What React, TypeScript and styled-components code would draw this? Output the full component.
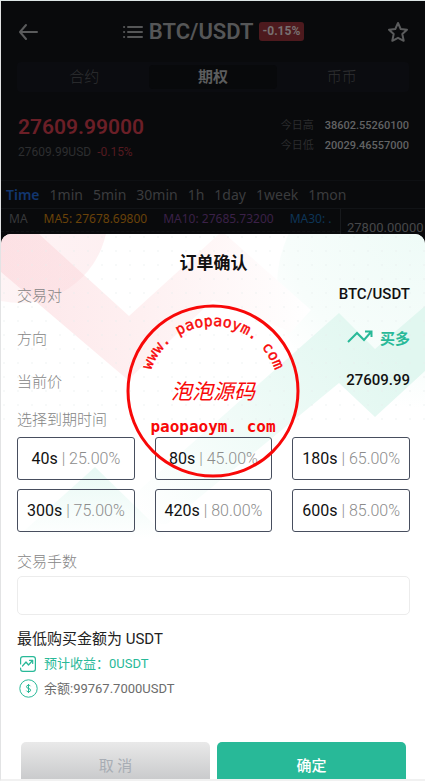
import React from "react";
import styled, { createGlobalStyle } from "styled-components";

const Global = createGlobalStyle`
  *, *::before, *::after { box-sizing: border-box; }
  body {
    margin: 0;
    background: #f1f1f1;
    font-family: Roboto, "Noto Sans CJK SC", sans-serif;
  }
  button, input { font: inherit; }
  button { padding: 0; border: 0; background: none; cursor: pointer; }
  svg { display: block; }
  h1, h2, p, dl, dd, dt, fieldset, legend { margin: 0; padding: 0; }
`;

const Page = styled.div`
  position: relative;
  height: 100vh;
  overflow: hidden;
  background: #090a0c;
  border-top: 1px solid #dde6e6;
  border-left: 1px solid #e2e3e4;
  border-bottom: 2px solid #f1f1f1;
`;

/* Market screen */

const TopBar = styled.header`
  display: grid;
  grid-template-columns: 40px 1fr 40px;
  align-items: center;
  height: 61px;
  padding: 0 16px;
  color: #5a5b5c;
`;

const IconButton = styled.button<{ $end?: boolean }>`
  display: flex;
  justify-content: ${(p) => (p.$end ? "flex-end" : "flex-start")};
  color: inherit;
`;

const Pair = styled.div`
  display: flex;
  align-items: center;
  justify-content: center;
  gap: 5px;
`;

const PairName = styled.h1`
  font-size: 22px;
  line-height: 30px;
  font-weight: 600;
  color: #555657;
`;

const Change = styled.span`
  padding: 0 4px;
  border-radius: 3px;
  background: #4d1a1e;
  color: #777071;
  font-size: 12px;
  line-height: 19px;
  font-weight: 700;
`;

const Tabs = styled.nav`
  display: grid;
  grid-template-columns: repeat(3, 1fr);
  margin: 0 16px;
  padding: 3px;
  height: 30px;
  border-radius: 4px;
  background: #0b0c10;
`;

const Tab = styled.button<{ $active?: boolean }>`
  border-radius: 4px;
  font-size: 15px;
  line-height: 24px;
  color: ${(p) => (p.$active ? "#5c5d5e" : "#2f3032")};
  font-weight: ${(p) => (p.$active ? 700 : 300)};
  background: ${(p) => (p.$active ? "#08090b" : "transparent")};
`;

const Quote = styled.section`
  display: flex;
  justify-content: space-between;
  padding: 20px 16px 0 17px;
  height: 88px;
`;

const Price = styled.p`
  font-size: 21px;
  line-height: 30px;
  font-weight: 600;
  color: #6b1f27;
`;

const SubPrice = styled.p`
  display: flex;
  gap: 6px;
  margin-top: 2px;
  font-size: 12px;
  line-height: 16px;
  color: #2d2e30;
`;

const Fall = styled.span`
  color: #541a20;
`;

const Range = styled.dl`
  display: grid;
  grid-template-columns: auto auto;
  column-gap: 11px;
  align-content: start;
  font-size: 11px;
  line-height: 20px;
  padding-top: 4px;
  dt { color: #2b2c2e; }
  dd { color: #626364; font-weight: 500; }
`;

const Periods = styled.nav`
  display: flex;
  align-items: center;
  gap: 10px;
  height: 29px;
  padding: 0 5px;
  border-top: 1px solid #0e1013;
  border-bottom: 1px solid #111316;
  font-family: "Noto Sans", sans-serif;
`;

const Period = styled.button<{ $active?: boolean }>`
  font-size: 14px;
  line-height: 20px;
  font-weight: ${(p) => (p.$active ? 600 : 400)};
  color: ${(p) => (p.$active ? "#12366f" : "#3b3c3e")};
`;

const Chart = styled.section`
  display: grid;
  grid-template-columns: 1fr 85px;
  height: 100px;
  font-size: 12px;
  line-height: 18px;
`;

const Averages = styled.div`
  display: flex;
  gap: 16px;
  padding: 1px 0 0 8px;
  height: 23px;
  overflow: hidden;
  white-space: nowrap;
  border-bottom: 1px dashed #101215;
  font-family: "Noto Sans", sans-serif;
`;

const Average = styled.span<{ $color: string }>`
  color: ${(p) => p.$color};
`;

const Axis = styled.div`
  padding: 10px 0 0 6px;
  border-left: 1px solid #17191c;
  font-size: 13px;
  color: #47484a;
`;

/* Order sheet */

const Sheet = styled.section`
  position: absolute;
  inset: auto 0 0 0;
  height: 70vh;
  max-height: calc(100% - 233px);
  overflow: hidden;
  border-radius: 10px 10px 0 0;
  background: #fff;
`;

const Art = styled.svg`
  position: absolute;
  top: 0;
  left: 0;
  width: 100%;
`;

const Content = styled.form`
  position: relative;
  padding: 18px 15px 0 16px;
`;

const Title = styled.h2`
  text-align: center;
  font-size: 17px;
  line-height: 22px;
  font-weight: 600;
  color: #111;
`;

const Details = styled.dl`
  display: flex;
  flex-direction: column;
  margin-bottom: 9px;
`;

const Detail = styled.div<{ $tall?: boolean }>`
  display: flex;
  justify-content: space-between;
  align-items: center;
  height: ${(p) => (p.$tall ? 46 : 40)}px;
  font-size: 15px;
`;

const Term = styled.dt`
  font-weight: 300;
  color: #858585;
`;

const Value = styled.dd<{ $up?: boolean }>`
  display: flex;
  align-items: center;
  gap: 7px;
  font-weight: ${(p) => (p.$up ? 600 : 500)};
  color: ${(p) => (p.$up ? "#28b998" : "#111")};
`;

const Caption = styled.legend`
  font-size: 15px;
  line-height: 22px;
  font-weight: 300;
  color: #858585;
`;

const Expiry = styled.fieldset`
  border: 0;
  min-width: 0;
`;

const Options = styled.div`
  display: grid;
  grid-template-columns: repeat(3, 1fr);
  gap: 9px 20px;
  padding-top: 6px;
`;

const Option = styled.button`
  height: 43px;
  border: 1px solid #474e5e;
  border-radius: 3px;
  font-size: 16px;
  white-space: nowrap;
  color: #111;
`;

const Rate = styled.span`
  font-weight: 300;
  color: #8c8c8c;
`;

const Label = styled.label`
  display: block;
  margin-top: 19px;
  font-size: 15px;
  line-height: 22px;
  font-weight: 300;
  color: #858585;
`;

const Amount = styled.input`
  display: block;
  width: 100%;
  height: 39px;
  margin-top: 3px;
  padding: 0 10px;
  border: 1px solid #ececec;
  border-radius: 5px;
  background: #fff;
`;

const Minimum = styled.p`
  margin-top: 12px;
  font-size: 15px;
  line-height: 24px;
  color: #222;
`;

const Note = styled.p<{ $up?: boolean }>`
  display: grid;
  grid-template-columns: 22px 1fr;
  align-items: center;
  gap: 5px;
  height: 25px;
  font-size: 13px;
  line-height: 20px;
  color: ${(p) => (p.$up ? "#28b998" : "#6c6c6c")};
  svg { justify-self: center; }
`;

const Actions = styled.div`
  display: grid;
  grid-template-columns: 1fr 1fr;
  gap: 7px;
  padding: 0 4px;
  margin-top: 41px;
`;

const Action = styled.button<{ $primary?: boolean }>`
  height: 44px;
  border-radius: 5px;
  font-size: 15px;
  font-weight: ${(p) => (p.$primary ? 500 : 400)};
  color: ${(p) => (p.$primary ? "#fff" : "#a8adb4")};
  background: ${(p) => (p.$primary ? "#28b998" : "linear-gradient(#e9e9e9, #c4c5c7)")};
`;

const Stamp = styled.svg`
  position: absolute;
  top: 303px;
  left: 50%;
  transform: translateX(-50%);
  pointer-events: none;
`;

const SheetArt = () => (
  <Art viewBox="0 0 424 310" aria-hidden="true">
    <defs>
      <linearGradient id="pink" x1="0" y1="0" x2="1" y2="0">
        <stop offset="0" stopColor="#fde6e9" />
        <stop offset="0.45" stopColor="#fef0f1" />
        <stop offset="1" stopColor="#fff" />
      </linearGradient>
      <linearGradient id="pinkDisc" x1="0" y1="0" x2="1" y2="0">
        <stop offset="0" stopColor="#fbd3d8" stopOpacity="0.2" />
        <stop offset="1" stopColor="#fbd3d8" stopOpacity="0.35" />
      </linearGradient>
      <linearGradient id="green" gradientUnits="userSpaceOnUse" x1="380" y1="100" x2="140" y2="290">
        <stop offset="0" stopColor="#e1f7f0" />
        <stop offset="0.4" stopColor="#ecfaf6" />
        <stop offset="1" stopColor="#fff" />
      </linearGradient>
      <radialGradient id="greenDisc" cx="0.6" cy="0.25" r="0.75">
        <stop offset="0" stopColor="#eefbf7" />
        <stop offset="0.75" stopColor="#f7fdfb" />
        <stop offset="1" stopColor="#fff" />
      </radialGradient>
      <linearGradient id="peak" x1="0" y1="0" x2="0" y2="1">
        <stop offset="0" stopColor="#e8f9f4" />
        <stop offset="1" stopColor="#fff" />
      </linearGradient>
      <pattern id="dots" width="14" height="14" patternUnits="userSpaceOnUse">
        <circle cx="3" cy="3" r="1" fill="#e7eeee" fillOpacity="0.45" />
      </pattern>
    </defs>
    <circle cx="399" cy="52" r="123" fill="url(#greenDisc)" />
    <path d="M0 0H38L128 82L218 0H224L310 76L290 98L212 66L127 146L0 38Z" fill="url(#pink)" />
    <circle cx="19" cy="-19" r="88" fill="url(#pinkDisc)" />
    <path d="M424 72L374 115L338 79L100 290H166L338 149L374 183L424 137Z" fill="url(#green)" />
    <path d="M94 233L168 305H14Z" fill="url(#peak)" />
    <rect width="424" height="190" fill="url(#dots)" />
  </Art>
);

const options = [
  ["40s", "25.00%"],
  ["80s", "45.00%"],
  ["180s", "65.00%"],
  ["300s", "75.00%"],
  ["420s", "80.00%"],
  ["600s", "85.00%"],
];

const periods = ["Time", "1min", "5min", "30min", "1h", "1day", "1week", "1mon"];

export default function App() {
  return (
    <>
      <Global />
      <Page>
        <TopBar>
          <IconButton aria-label="返回">
            <svg width="22" height="22" viewBox="0 0 22 22" fill="none" stroke="currentColor" strokeWidth="2" strokeLinecap="round" strokeLinejoin="round">
              <path d="M9 4L3 11L9 18M3 11H20" />
            </svg>
          </IconButton>
          <Pair>
            <svg width="22" height="16" viewBox="0 0 22 16" fill="none" stroke="#555657" strokeWidth="2" strokeLinecap="round">
              <path d="M6 3H20M6 8H20M6 13H20M2 3H2.2M2 8H2.2M2 13H2.2" />
            </svg>
            <PairName>BTC/USDT</PairName>
            <Change>-0.15%</Change>
          </Pair>
          <IconButton $end aria-label="收藏">
            <svg width="22" height="22" viewBox="0 0 22 22" fill="none" stroke="currentColor" strokeWidth="2" strokeLinejoin="round">
              <path d="M11 2L13.7 8L20 8.7L15.3 13L16.7 19.8L11 16.8L5.3 19.8L6.7 13L2 8.7L8.3 8Z" />
            </svg>
          </IconButton>
        </TopBar>
        <Tabs>
          <Tab>合约</Tab>
          <Tab $active>期权</Tab>
          <Tab>币币</Tab>
        </Tabs>
        <Quote>
          <div>
            <Price>27609.99000</Price>
            <SubPrice>
              27609.99USD <Fall>-0.15%</Fall>
            </SubPrice>
          </div>
          <Range>
            <dt>今日高</dt>
            <dd>38602.55260100</dd>
            <dt>今日低</dt>
            <dd>20029.46557000</dd>
          </Range>
        </Quote>
        <Periods>
          {periods.map((name, i) => (
            <Period key={name} $active={i === 0}>
              {name}
            </Period>
          ))}
        </Periods>
        <Chart>
          <Averages>
            <Average $color="#38393b">MA</Average>
            <Average $color="#6a4209">MA5: 27678.69800</Average>
            <Average $color="#3b2148">MA10: 27685.73200</Average>
            <Average $color="#0d3557">MA30: .</Average>
          </Averages>
          <Axis>27800.00000</Axis>
        </Chart>

        <Sheet role="dialog" aria-labelledby="order-title">
          <SheetArt />
          <Content onSubmit={(e: React.FormEvent) => e.preventDefault()}>
            <Title id="order-title">订单确认</Title>
            <Details>
              <Detail>
                <Term>交易对</Term>
                <Value>BTC/USDT</Value>
              </Detail>
              <Detail $tall>
                <Term>方向</Term>
                <Value $up>
                  <svg width="26" height="14" viewBox="0 0 26 14" fill="none" stroke="currentColor" strokeWidth="2">
                    <path d="M1 12L10 3L17 10L24 2M18 1.5H24.5V7" />
                  </svg>
                  买多
                </Value>
              </Detail>
              <Detail>
                <Term>当前价</Term>
                <Value>27609.99</Value>
              </Detail>
            </Details>
            <Expiry>
              <Caption>选择到期时间</Caption>
              <Options>
                {options.map(([time, rate]) => (
                  <Option type="button" key={time}>
                    {time} <Rate>| {rate}</Rate>
                  </Option>
                ))}
              </Options>
            </Expiry>
            <Label htmlFor="lots">交易手数</Label>
            <Amount id="lots" />
            <Minimum>最低购买金额为 USDT</Minimum>
            <Note $up>
              <svg width="16" height="16" viewBox="0 0 16 16" fill="none" stroke="#28b998" strokeLinecap="round" strokeLinejoin="round">
                <path d="M.6 8V3Q.6 .6 3 .6H13Q15.4 .6 15.4 3V13Q15.4 15.4 13 15.4H3Q.6 15.4 .6 13V12" strokeWidth="1.2" />
                <path d="M2.5 10L6 6L8.5 9L12.5 4.5M9.5 4.3H12.7V7.5" strokeWidth="1.2" />
              </svg>
              预计收益：0USDT
            </Note>
            <Note>
              <svg width="19" height="19" viewBox="0 0 19 19" fill="none" stroke="#28b998" strokeWidth="1">
                <circle cx="9.5" cy="9.5" r="8.7" />
                <path d="M11.5 7.2Q11 6.2 9.5 6.2Q7.5 6.2 7.5 7.8Q7.5 9 9.5 9.4Q11.6 9.8 11.6 11.2Q11.6 12.8 9.5 12.8Q7.8 12.8 7.3 11.6M9.5 5V14" />
              </svg>
              余额:99767.7000USDT
            </Note>
            <Actions>
              <Action type="button">取 消</Action>
              <Action type="submit" $primary>
                确定
              </Action>
            </Actions>
          </Content>
        </Sheet>

        <Stamp width="174" height="174" viewBox="0 0 174 174" fill="#f80808" textAnchor="middle" fontFamily='"DejaVu Sans Mono", monospace'>
          <circle cx="87" cy="87" r="85" fill="none" stroke="#f80808" strokeWidth="3" />
          <path id="stamp-arc" d="M22.2 97A65.5 65.5 0 1 1 151.8 97" fill="none" />
          <text fontSize="15" stroke="#f80808" strokeWidth="0.4">
            <textPath href="#stamp-arc" startOffset="50%">
              www. paopaoym. com
            </textPath>
          </text>
          <text x="87" y="95" fontSize="21" fontStyle="italic" fontFamily='"Noto Sans CJK SC", sans-serif'>
            泡泡源码
          </text>
          <text x="87" y="128" fontSize="16" fontWeight="700">
            paopaoym. com
          </text>
        </Stamp>
      </Page>
    </>
  );
}
